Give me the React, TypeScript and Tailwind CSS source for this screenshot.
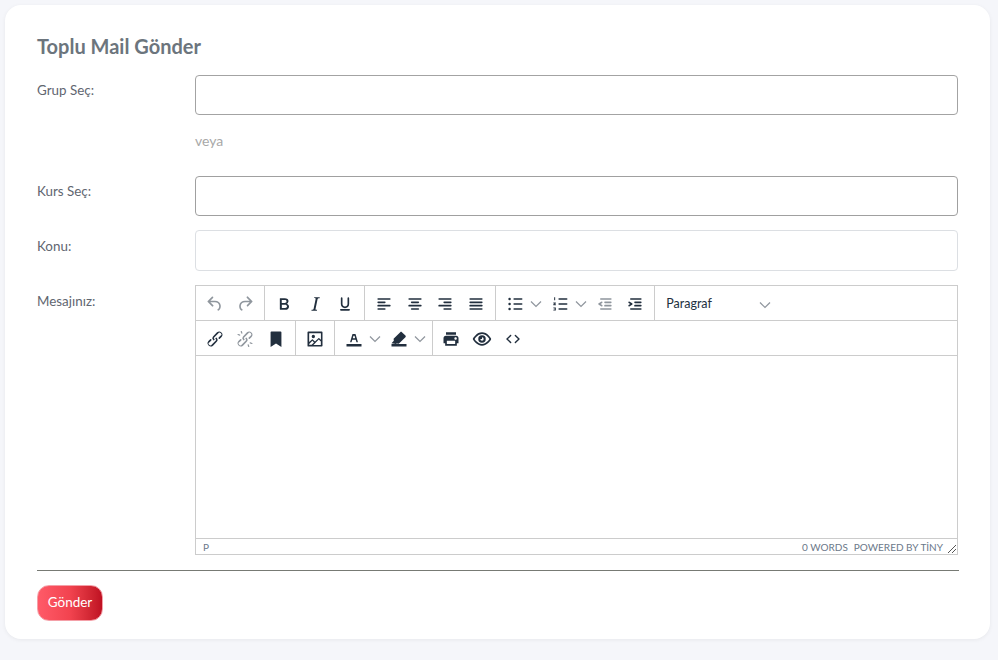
import React from "react";

const P: Record<string, string> = {
  undo: "M6.4 8H12c3.7 0 6.2 2 6.8 5.1.6 2.7-.4 5.6-2.3 6.8a1 1 0 0 1-1-1.8c1.1-.6 1.8-2.7 1.4-4.6-.5-2.1-2.1-3.5-4.9-3.5H6.4l3.3 3.3a1 1 0 1 1-1.4 1.4l-5-5a1 1 0 0 1 0-1.4l5-5a1 1 0 0 1 1.4 1.4L6.4 8z",
  redo: "M17.6 10H12c-2.8 0-4.4 1.4-4.9 3.5-.4 2 .3 4 1.4 4.6a1 1 0 1 1-1 1.8c-2-1.2-2.9-4.1-2.3-6.8.6-3 3-5.1 6.8-5.1h5.6l-3.3-3.3a1 1 0 1 1 1.4-1.4l5 5a1 1 0 0 1 0 1.4l-5 5a1 1 0 0 1-1.4-1.4l3.3-3.3z",
  bold: "M7.8 19c-.3 0-.5 0-.6-.2l-.2-.5V5.7c0-.2 0-.4.2-.5l.6-.2h5c1.5 0 2.7.3 3.5 1 .7.6 1.1 1.4 1.1 2.5a3 3 0 0 1-.6 1.9c-.4.6-1 1-1.6 1.2.4.1.9.3 1.3.6s.8.7 1 1.2c.4.4.5 1 .5 1.6 0 1.3-.4 2.3-1.3 3-.8.7-2.1 1-3.8 1H7.8zm5-8.3c.6 0 1.2-.1 1.6-.5.4-.3.6-.7.6-1.3 0-1.1-.8-1.7-2.3-1.7H9.3v3.5h3.4zm.5 6c.7 0 1.3-.1 1.7-.4.4-.4.6-.9.6-1.5s-.2-1-.7-1.4c-.4-.3-1-.4-2-.4H9.4v3.8h4z",
  italic: "M17.7 4l-.1 1h-.4c-.7 0-1.2 0-1.6.3-.3.3-.5.7-.6 1.3l-2.3 11c-.1.2-.1.4-.1.7 0 .5.5.7 1.6.7h.3l-.2 1H7.7l.2-1h.3c1.2 0 2-.5 2.2-1.7l2.3-11 .1-.6c0-.7-.5-.9-1.6-.9h-.3l.2-1h6.6z",
  underline: "M16 4c.6 0 1 .4 1 1v7c0 2.8-2.2 5-5 5s-5-2.2-5-5V5c0-.6.4-1 1-1s1 .4 1 1v7c0 1.7 1.3 3 3 3s3-1.3 3-3V5c0-.6.4-1 1-1zM7 18h10c.6 0 1 .4 1 1s-.4 1-1 1H7a1 1 0 1 1 0-2z",
  left: "M5 5h14c.6 0 1 .4 1 1s-.4 1-1 1H5a1 1 0 1 1 0-2zm0 4h8c.6 0 1 .4 1 1s-.4 1-1 1H5a1 1 0 1 1 0-2zm0 8h8c.6 0 1 .4 1 1s-.4 1-1 1H5a1 1 0 0 1 0-2zm0-4h14c.6 0 1 .4 1 1s-.4 1-1 1H5a1 1 0 0 1 0-2z",
  center: "M5 5h14c.6 0 1 .4 1 1s-.4 1-1 1H5a1 1 0 1 1 0-2zm3 4h8c.6 0 1 .4 1 1s-.4 1-1 1H8a1 1 0 1 1 0-2zm0 8h8c.6 0 1 .4 1 1s-.4 1-1 1H8a1 1 0 0 1 0-2zm-3-4h14c.6 0 1 .4 1 1s-.4 1-1 1H5a1 1 0 0 1 0-2z",
  right: "M5 5h14c.6 0 1 .4 1 1s-.4 1-1 1H5a1 1 0 1 1 0-2zm6 4h8c.6 0 1 .4 1 1s-.4 1-1 1h-8a1 1 0 0 1 0-2zm0 8h8c.6 0 1 .4 1 1s-.4 1-1 1h-8a1 1 0 0 1 0-2zm-6-4h14c.6 0 1 .4 1 1s-.4 1-1 1H5a1 1 0 0 1 0-2z",
  justify: "M5 5h14c.6 0 1 .4 1 1s-.4 1-1 1H5a1 1 0 1 1 0-2zm0 4h14c.6 0 1 .4 1 1s-.4 1-1 1H5a1 1 0 1 1 0-2zm0 4h14c.6 0 1 .4 1 1s-.4 1-1 1H5a1 1 0 0 1 0-2zm0 4h14c.6 0 1 .4 1 1s-.4 1-1 1H5a1 1 0 0 1 0-2z",
  bullets: "M11 5h9c.6 0 1 .4 1 1s-.4 1-1 1h-9a1 1 0 0 1 0-2zm0 6h9c.6 0 1 .4 1 1s-.4 1-1 1h-9a1 1 0 0 1 0-2zm0 6h9c.6 0 1 .4 1 1s-.4 1-1 1h-9a1 1 0 0 1 0-2zM5.5 4.5a1.5 1.5 0 1 1 0 3 1.5 1.5 0 0 1 0-3zm0 6a1.5 1.5 0 1 1 0 3 1.5 1.5 0 0 1 0-3zm0 6a1.5 1.5 0 1 1 0 3 1.5 1.5 0 0 1 0-3z",
  numbers: "M11 5h9c.6 0 1 .4 1 1s-.4 1-1 1h-9a1 1 0 0 1 0-2zm0 6h9c.6 0 1 .4 1 1s-.4 1-1 1h-9a1 1 0 0 1 0-2zm0 6h9c.6 0 1 .4 1 1s-.4 1-1 1h-9a1 1 0 0 1 0-2zM5 4h1.2v3.6H5zM4 10.2h3v1.2l-1.6 1h1.7v1.2H4v-1.2l1.6-1H4zM4 16.2h3v3.6H4v-1h1.8v-.4H4.6v-.8h1.2v-.4H4z",
  outdent: "M7 5h12c.6 0 1 .4 1 1s-.4 1-1 1H7a1 1 0 1 1 0-2zm5 4h7c.6 0 1 .4 1 1s-.4 1-1 1h-7a1 1 0 0 1 0-2zm0 4h7c.6 0 1 .4 1 1s-.4 1-1 1h-7a1 1 0 0 1 0-2zm-5 4h12a1 1 0 0 1 0 2H7a1 1 0 0 1 0-2zm1.6-3.8a1 1 0 0 1-1.2 1.6l-3-2a1 1 0 0 1 0-1.6l3-2a1 1 0 0 1 1.2 1.6L6.8 12l1.8 1.2z",
  indent: "M7 5h12c.6 0 1 .4 1 1s-.4 1-1 1H7a1 1 0 1 1 0-2zm5 4h7c.6 0 1 .4 1 1s-.4 1-1 1h-7a1 1 0 0 1 0-2zm0 4h7c.6 0 1 .4 1 1s-.4 1-1 1h-7a1 1 0 0 1 0-2zm-5 4h12a1 1 0 0 1 0 2H7a1 1 0 0 1 0-2zm-2.6-3.8L6.2 12l-1.8-1.2a1 1 0 0 1 1.2-1.6l3 2a1 1 0 0 1 0 1.6l-3 2a1 1 0 1 1-1.2-1.6z",
  link: "M6.2 12.3a1 1 0 0 1 1.4 1.4l-2.1 2.1a2 2 0 1 0 2.7 2.7l4.8-4.8a1 1 0 0 0 0-1.4 1 1 0 1 1 1.4-1.3 2.9 2.9 0 0 1 0 4L9.6 20a3.9 3.9 0 0 1-5.5-5.5l2.1-2.2zm11.6-.6a1 1 0 0 1-1.4-1.4l2.1-2.1a2 2 0 1 0-2.7-2.7L11 10.3a1 1 0 0 0 0 1.4A1 1 0 1 1 9.6 13a2.9 2.9 0 0 1 0-4L14.4 4a3.9 3.9 0 0 1 5.5 5.5l-2.1 2.2z",
  unlink: "M6.2 12.3a1 1 0 0 1 1.4 1.4l-2 2a2 2 0 1 0 2.6 2.8l4.8-4.8a1 1 0 0 0 0-1.4 1 1 0 1 1 1.4-1.3 2.9 2.9 0 0 1 0 4L9.6 20a3.9 3.9 0 0 1-5.5-5.5l2.1-2.2zm11.6-.6a1 1 0 0 1-1.4-1.4l2.1-2a2 2 0 1 0-2.7-2.8L11 10.3a1 1 0 0 0 0 1.4A1 1 0 1 1 9.6 13a2.9 2.9 0 0 1 0-4L14.4 4a3.9 3.9 0 0 1 5.5 5.5l-2.1 2.2zM7.3 2.3c.4-.1.8.1.9.5l.7 2c.1.4-.1.8-.5.9s-.8-.1-.9-.5l-.7-2c-.1-.4.1-.8.5-.9zM3 6.4c.1-.4.5-.6.9-.5l2 .7c.4.1.6.5.5.9s-.5.6-.9.5l-2-.7c-.4-.1-.6-.5-.5-.9zM16.7 21.7c-.4.1-.8-.1-.9-.5l-.7-2c-.1-.4.1-.8.5-.9s.8.1.9.5l.7 2c.1.4-.1.8-.5.9zM21 17.6c-.1.4-.5.6-.9.5l-2-.7c-.4-.1-.6-.5-.5-.9s.5-.6.9-.5l2 .7c.4.1.6.5.5.9z",
  bookmark: "M5.5 4v17.5l6.5-4 6.5 4V4c0-.6-.4-1-1-1h-11a1 1 0 0 0-1 1z",
  image: "M5 15.7l3.3-3.2c.3-.3.7-.3 1 0L12 15l4.1-4c.3-.4.8-.4 1 0l2 1.9V5H5v10.7zM5 18v1h3l2.8-2.9-2-2L5 17.9zm14-3l-2.5-2.4-6.4 6.5H19v-4zM4 3h16c.6 0 1 .4 1 1v16c0 .6-.4 1-1 1H4a1 1 0 0 1-1-1V4c0-.6.4-1 1-1zm6 8a2 2 0 1 0 0-4 2 2 0 0 0 0 4z",
  color: "M3 18h18v3H3zM8.7 16h-.8a.5.5 0 0 1-.5-.6l2.7-9c.1-.3.3-.4.5-.4h2.8c.2 0 .4.1.5.4l2.7 9a.5.5 0 0 1-.5.6h-.8a.5.5 0 0 1-.4-.4l-.7-2.2c0-.3-.3-.4-.5-.4h-3.4c-.2 0-.4.1-.5.4l-.7 2.2c0 .3-.2.4-.4.4zm2.6-7.6l-.6 2a.5.5 0 0 0 .5.6h1.6a.5.5 0 0 0 .5-.6l-.6-2c0-.3-.3-.4-.5-.4h-.4c-.2 0-.4.1-.5.4z",
  highlight: "M3 18h18v3H3zM3 17l2.8-2.8-.3-2.4 8-8c.6-.6 1.4-.6 2 0l4.2 4c.6.6.6 1.4 0 2l-8 8-2.4-.3-1 .6-5.3-1.1z",
  print: "M18 8H6a3 3 0 0 0-3 3v6h2v3h14v-3h2v-6a3 3 0 0 0-3-3zm-1 10H7v-4h10v4zm.5-5c-.8 0-1.5-.7-1.5-1.5s.7-1.5 1.5-1.5 1.5.7 1.5 1.5-.7 1.5-1.5 1.5zM18 4H6v3h12V4z",
  preview: "M3.5 12.5c.5.8 1.1 1.6 1.8 2.3 2 2 4.2 3.2 6.7 3.2s4.7-1.2 6.7-3.2a16.2 16.2 0 0 0 2.1-2.8 15.7 15.7 0 0 0-2.1-2.8c-2-2-4.2-3.2-6.7-3.2a9.3 9.3 0 0 0-6.7 3.2A16.2 16.2 0 0 0 3.2 12c0 .2.2.3.3.5zm-2.4-1l.7-1.2L4 7.8C6.2 5.4 8.9 4 12 4c3 0 5.8 1.4 8.1 3.8a18.2 18.2 0 0 1 2.8 3.7v1l-.7 1.2-2.1 2.5c-2.3 2.4-5 3.8-8.1 3.8-3 0-5.8-1.4-8.1-3.8a18.2 18.2 0 0 1-2.8-3.7 1 1 0 0 1 0-1zM12 7.5a4.5 4.5 0 1 1 0 9 4.5 4.5 0 0 1 0-9zm0 2.5v2H10a2 2 0 0 0 4 0 2 2 0 0 0-2-2z",
  code: "M9.8 15.7c.3.3.3.8 0 1-.3.4-.9.4-1.2 0l-4.4-4.1a.8.8 0 0 1 0-1.2l4.4-4.2c.3-.3.9-.3 1.2 0 .3.3.3.8 0 1.1L6 12l3.8 3.7zM14.2 15.7c-.3.3-.3.8 0 1 .4.4.9.4 1.2 0l4.4-4.1c.3-.3.3-.9 0-1.2l-4.4-4.2a.8.8 0 0 0-1.2 0c-.3.3-.3.8 0 1.1L18 12l-3.8 3.7z",
};

const Icon = ({ n, dim }: { n: string; dim?: boolean }) => (
  <svg viewBox="0 0 24 24" className={dim ? "w-5 h-5 fill-[#222f3e] opacity-50" : "w-5 h-5 fill-[#222f3e]"}>
    <path d={P[n]} fillRule="evenodd" />
  </svg>
);

const Chevron = () => (
  <svg viewBox="0 0 12 10" className="w-3 h-[10px] fill-none stroke-[#222f3e] opacity-50">
    <path d="M1 2.5l5 5 5-5" strokeWidth="1.2" />
  </svg>
);

const Btn = ({ n, dim }: { n: string; dim?: boolean }) => (
  <div className="w-[30.67px] h-[34px] pt-[2px] flex items-center justify-center">
    <Icon n={n} dim={dim} />
  </div>
);

const Split = ({ n }: { n: string }) => (
  <div className="w-[45px] h-[34px] pt-[2px] flex items-center pl-[6px] gap-[5px]">
    <Icon n={n} />
    <Chevron />
  </div>
);

const Group = ({ children, last }: { children: React.ReactNode; last?: boolean }) => (
  <div className={last ? "flex items-center px-[3.5px] h-[34px]" : "flex items-center px-[3.5px] h-[34px] border-r border-[#cccccc]"}>
    {children}
  </div>
);

const label = "w-[158px] shrink-0 text-[13.4px] leading-[21px] text-[#5f6670]";

export default function App() {
  return (
    <div className="min-h-[660px] bg-[#f5f6fa] pt-[5px] pl-[5px] pr-2 pb-[21px] font-['Lato','Noto_Sans',sans-serif]">
      <div className="h-[634px] bg-white rounded-2xl shadow-[0_1px_4px_rgba(0,0,0,0.06)] pt-[29px] pl-[32px] pr-[31px]">
        <h1 className="text-[20px] leading-[24px] font-bold text-[#6c757d]">Toplu Mail Gönder</h1>

        <div className="flex mt-[17px]">
          <div className={`${label} pt-[5px]`}>Grup Seç:</div>
          <div className="w-[763px] h-10 border border-[#a3a3a3] rounded" />
        </div>
        <div className="pl-[158px] mt-[15px] text-[14px] leading-[21px] text-[#a8a8a8]">veya</div>
        <div className="flex mt-[25px]">
          <div className={`${label} pt-[5px]`}>Kurs Seç:</div>
          <div className="w-[763px] h-10 border border-[#a0a0a0] rounded" />
        </div>
        <div className="flex mt-[14px]">
          <div className={`${label} pt-[6px]`}>Konu:</div>
          <div className="w-[763px] h-[41px] border border-[#dcdfe3] rounded" />
        </div>

        <div className="flex mt-[14px]">
          <div className={`${label} pt-[6px]`}>Mesajınız:</div>
          <div className="w-[763px] h-[270px] border border-[#cccccc] flex flex-col">
            <div className="h-[35px] flex items-center border-b border-[#cccccc] shrink-0">
              <Group><Btn n="undo" dim /><Btn n="redo" dim /></Group>
              <Group><Btn n="bold" /><Btn n="italic" /><Btn n="underline" /></Group>
              <Group><Btn n="left" /><Btn n="center" /><Btn n="right" /><Btn n="justify" /></Group>
              <Group><Split n="bullets" /><Split n="numbers" /><Btn n="outdent" dim /><Btn n="indent" /></Group>
              <div className="w-[127px] pl-[11px] pr-[11px] pt-[3px] flex items-center justify-between text-[12.5px] text-[#222f3e]">
                <span>Paragraf</span>
                <Chevron />
              </div>
            </div>
            <div className="h-[35px] flex items-center border-b border-[#cccccc] shrink-0">
              <Group><Btn n="link" /><Btn n="unlink" dim /><Btn n="bookmark" /></Group>
              <Group><Btn n="image" /></Group>
              <Group><Split n="color" /><Split n="highlight" /></Group>
              <Group last><Btn n="print" /><Btn n="preview" /><Btn n="code" /></Group>
            </div>
            <div className="flex-1" />
            <div className="h-[16px] border-t border-[#cccccc] flex items-center justify-between pl-[7px] pr-0 text-[10px] leading-none text-[#6b7889] shrink-0">
              <span>P</span>
              <div className="flex items-center">
                <span className="mr-[6px]">0 WORDS</span>
                <span>POWERED BY TİNY</span>
                <svg viewBox="0 0 10 10" className="w-[10px] h-[10px] ml-[4px] mt-[4px] stroke-[#555555] fill-none">
                  <path d="M1 9L9 1M5 9l4-4" strokeWidth="1" />
                </svg>
              </div>
            </div>
          </div>
        </div>

        <hr className="mt-[15px] w-[922px] border-0 border-t border-[#777a74]" />
        <button className="mt-[14px] w-[66px] h-[36px] rounded-xl border border-[#f4a0a8] bg-gradient-to-r from-[#ff5a68] via-[#f2434f] to-[#bf1022] text-white text-[13.5px] leading-none">
          Gönder
        </button>
      </div>
    </div>
  );
}
